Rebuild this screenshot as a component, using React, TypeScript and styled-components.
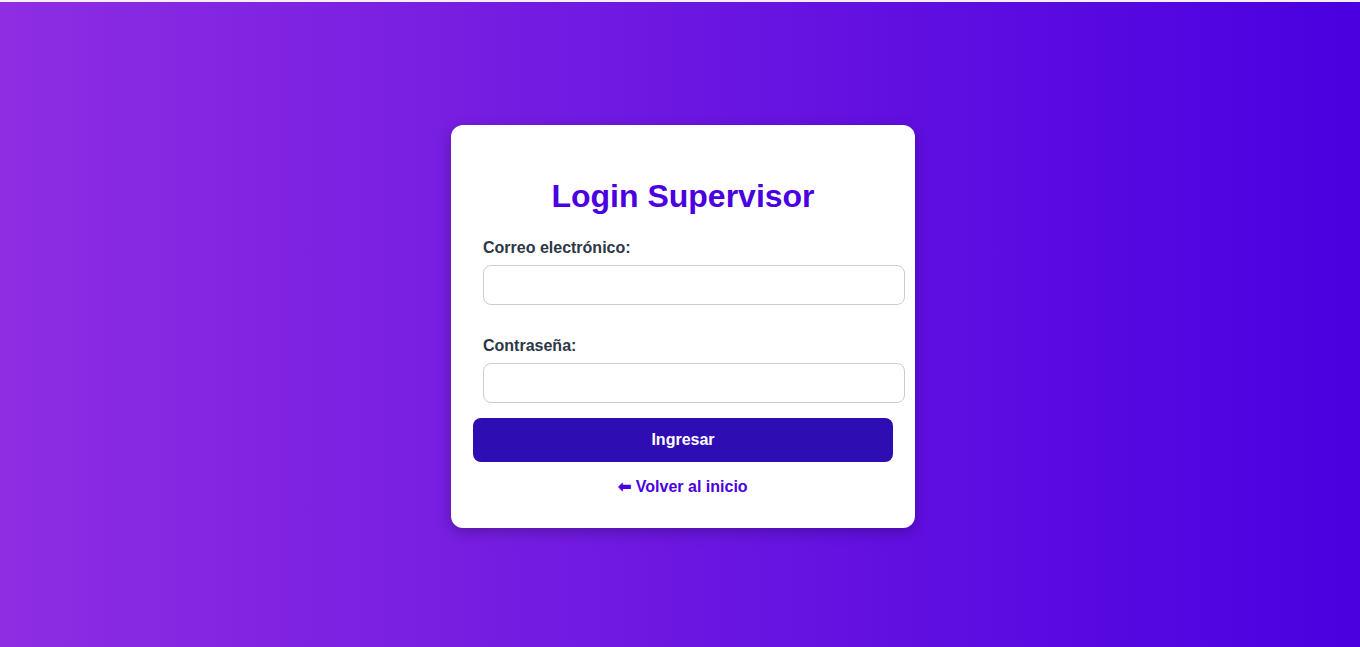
import React from "react";
import styled, { createGlobalStyle } from "styled-components";

const Global = createGlobalStyle`
  html, body { margin: 0; padding: 0; background: #f6eef6; }
  body { font-family: "Liberation Sans", Arial, sans-serif; }
  * { box-sizing: content-box; }
`;

const Page = styled.div`
  margin-top: 2px;
  height: 645px;
  background: linear-gradient(to right, #8e2de2, #4a00e0);
  display: flex;
  justify-content: center;
  align-items: flex-start;
  padding: 123px 0 0 6px;
  box-sizing: border-box;
`;

const Card = styled.div`
  width: 400px;
  padding: 32px;
  background: #ffffff;
  border-radius: 12px;
  box-shadow: 0 4px 14px rgba(0, 0, 0, 0.25);
  display: flex;
  flex-direction: column;
`;

const Title = styled.h2`
  margin: 21px 0 24px;
  text-align: center;
  font-size: 32px;
  font-weight: 700;
  color: #4a00e0;
`;

const Field = styled.div`
  display: flex;
  flex-direction: column;
  margin-bottom: ${(p: { $mb: number }) => p.$mb}px;
`;

const Label = styled.label`
  font-size: 16px;
  font-weight: 700;
  color: #2d3748;
  margin-bottom: 8px;
`;

const Input = styled.input`
  width: 400px;
  padding: 10px;
  border: 1px solid #cccccc;
  border-radius: 8px;
  font-size: 16px;
  font-family: "Liberation Sans", Arial, sans-serif;
  line-height: 18px;
  outline: none;
  background: #fff;
`;

const Button = styled.button`
  margin: 0 -10px;
  width: 420px;
  height: 44px;
  box-sizing: border-box;
  border: none;
  border-radius: 8px;
  background: #2e0db3;
  color: #ffffff;
  font-family: "Liberation Sans", Arial, sans-serif;
  font-size: 16px;
  font-weight: 700;
  cursor: pointer;
`;

const BackLink = styled.a`
  margin-top: 16px;
  align-self: center;
  color: #4a00e0;
  font-size: 16px;
  font-weight: 700;
  text-decoration: none;
  line-height: 18px;
`;

export default function App() {
  return (
    <>
      <Global />
      <Page>
        <Card>
          <Title>Login Supervisor</Title>
          <Field $mb={32}>
            <Label>Correo electrónico:</Label>
            <Input type="email" />
          </Field>
          <Field $mb={15}>
            <Label>Contraseña:</Label>
            <Input type="password" />
          </Field>
          <Button>Ingresar</Button>
          <BackLink href="#">⬅ Volver al inicio</BackLink>
        </Card>
      </Page>
    </>
  );
}
